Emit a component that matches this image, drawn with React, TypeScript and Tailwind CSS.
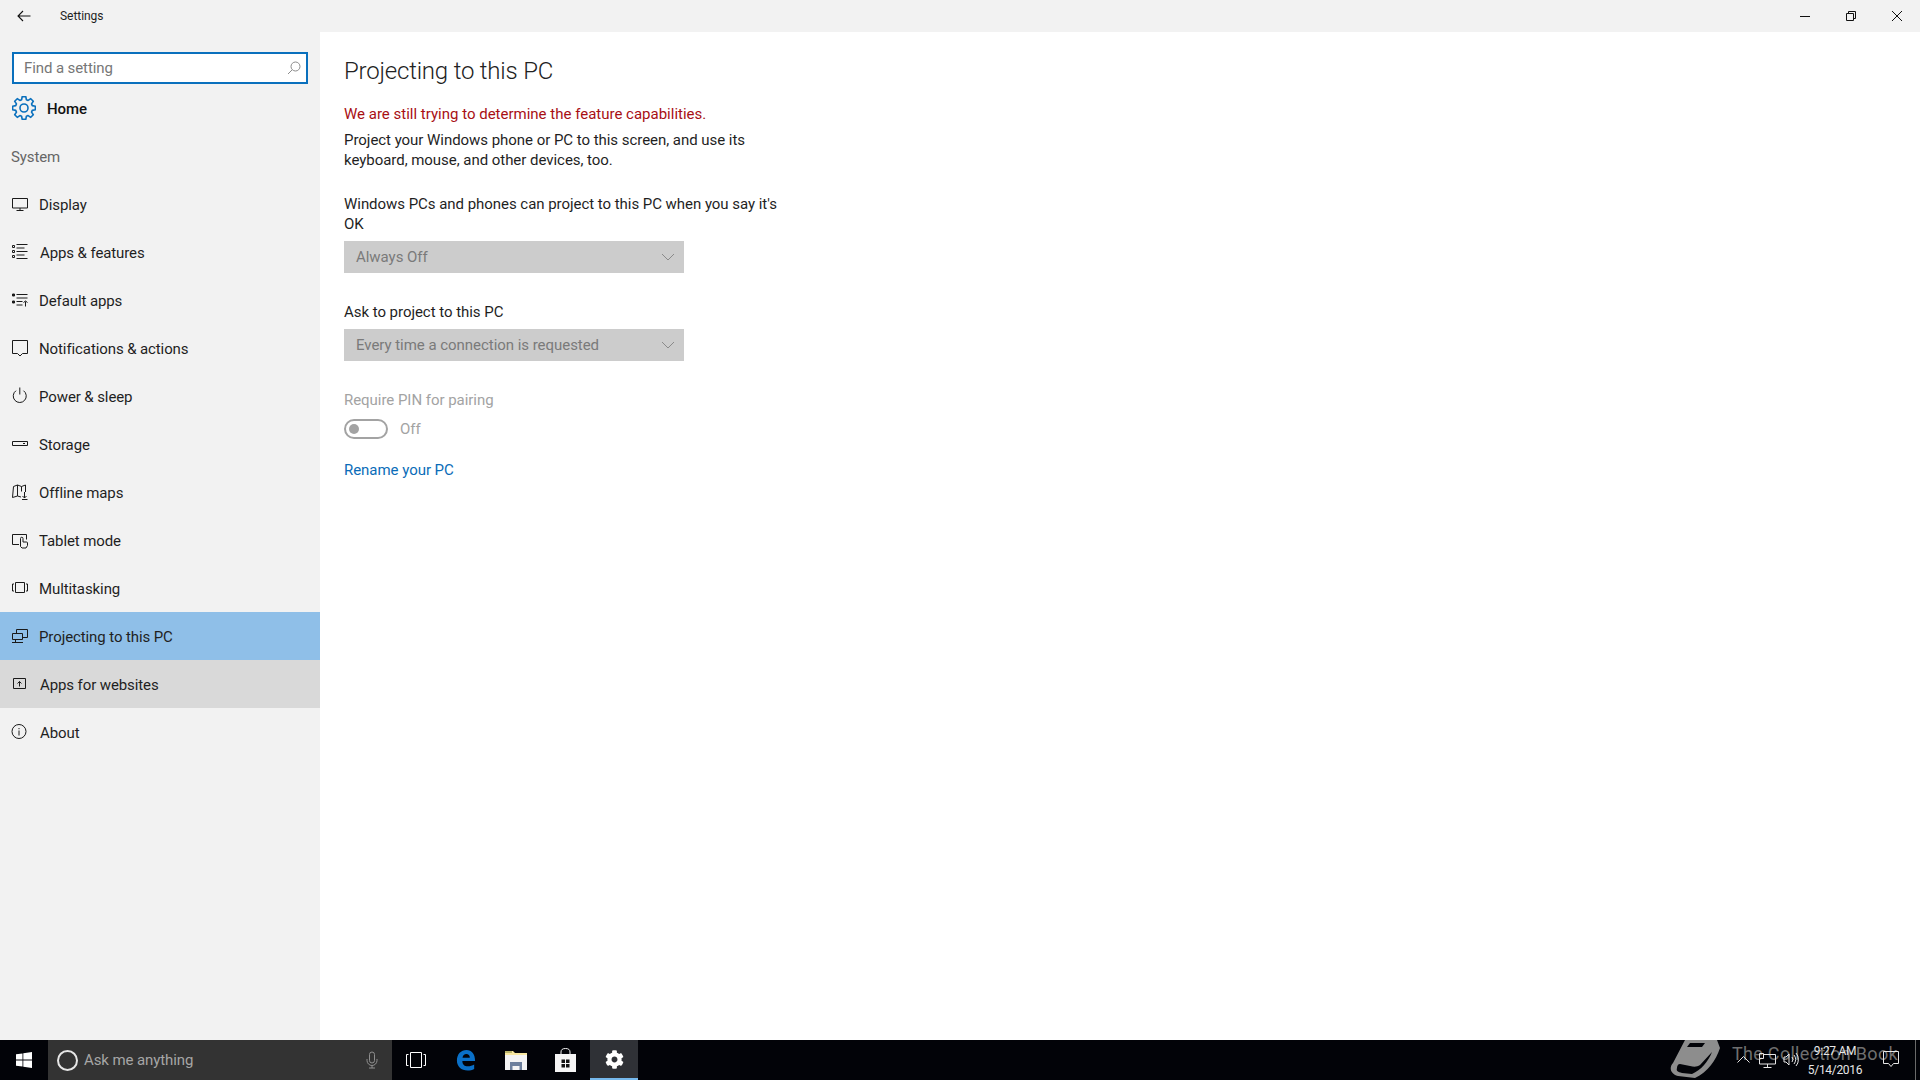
import React from "react";
import { FaCog } from "react-icons/fa";

const S = ({ children, w = 18, h = 18, vb = "0 0 18 18", c = "#1a1a1a" }: { children: React.ReactNode; w?: number; h?: number; vb?: string; c?: string }) => (
  <svg width={w} height={h} viewBox={vb} fill="none" stroke={c} strokeWidth="1" className="shrink-0">
    {children}
  </svg>
);

const gearPath = (() => {
  const teeth = 8;
  const pts: string[] = [];
  const c = 12;
  const outer = 11.5;
  const inner = 8.6;
  for (let i = 0; i < teeth; i++) {
    const a = (i * 2 * Math.PI) / teeth - Math.PI / 2;
    const d = (2 * Math.PI) / teeth;
    const ps = [
      [inner, a - d * 0.36],
      [outer, a - d * 0.2],
      [outer, a + d * 0.2],
      [inner, a + d * 0.36],
    ];
    ps.forEach(([r, t]) => {
      pts.push(`${(c + r * Math.cos(t)).toFixed(2)} ${(c + r * Math.sin(t)).toFixed(2)}`);
    });
  }
  return "M" + pts.join("L") + "Z";
})();

const icons: Record<string, React.ReactNode> = {
  display: <S><path d="M1.500 3.500h15v9.500h-15zM9 13v2M5.500 15.500h7" /></S>,
  apps: <S><path d="M1.500 2.500h2v2h-2zM1.500 7.500h2v2h-2zM1.500 12.500h2v2h-2z M5.500 1.500h11M5.500 5h8M5.500 8.500h11M5.500 15.500h11M5.500 12h8" /></S>,
  defaults: <S><path d="M1.500 3h2v2h-2zM1.500 10h2v2h-2z" fill="#1a1a1a" /><path d="M5.500 3.500h11M5.500 7h11M5.500 10.500h6M5.500 14h6M14.500 15.500v-5M12.500 11.500l2-1.500 2 1.500" /></S>,
  notifications: <S><path d="M1.500 1.500h15v13h-5L9 17l-2.500-2.500h-5z" /></S>,
  power: <S><path d="M5 3.700a6.500 6.500 0 1 0 7.500 0M8.800 .5v7" /></S>,
  storage: <S><path d="M1.500 6.500h15v4h-15z" /><path d="M12 8.500h2" /></S>,
  maps: <S><path d="M2.500 3.500l4-1.500 4 1.500 4-1.500v7M2.500 3.500l-1 11 5-1.500 3.500 1M6.500 2v11M10.500 3.500v5M13.500 9v6M11.500 13l2 2 2-2M11 16.500h5.500" /></S>,
  tablet: <S><path d="M8 13.500H1.500v-10h14v5" /><path d="M9.500 15.500v-8a1.200 1.200 0 0 1 2.500 0v3.500h3.500a1 1 0 0 1 1 1v2.500l-1.500 2.500h-4z" fill="#f2f2f2" /></S>,
  multitasking: <S><path d="M4.500 3.500h9v10h-9zM3 5H1.500v7H3M15 5h1.500v7H15" /></S>,
  projecting: <S><path d="M5.500 6V2.500h11v8H12M1.500 6.500h10v6h-10zM1 15.500h11M4.500 13v2.500" /></S>,
  websites: <S><path d="M2.500 3.500h12v10h-12zM8.500 11.500v-5M6.500 8.500l2-2 2 2" /></S>,
  about: <S><circle cx="8" cy="8.500" r="7" /><path d="M8 7.500v5M8 5v1.200" /></S>,
};

const items = [
  { k: "display", t: "Display", m: "ml-[10px]" },
  { k: "apps", t: "Apps & features", m: "ml-[11px]" },
  { k: "defaults", t: "Default apps", m: "ml-[10px]" },
  { k: "notifications", t: "Notifications & actions", m: "ml-[10px]" },
  { k: "power", t: "Power & sleep", m: "ml-[10px]" },
  { k: "storage", t: "Storage", m: "ml-[10px]" },
  { k: "maps", t: "Offline maps", m: "ml-[10px]" },
  { k: "tablet", t: "Tablet mode", m: "ml-[10px]" },
  { k: "multitasking", t: "Multitasking", m: "ml-[10px]" },
  { k: "projecting", t: "Projecting to this PC", m: "ml-[10px]", bg: "bg-[#8fbfe8]" },
  { k: "websites", t: "Apps for websites", m: "ml-[11px]", bg: "bg-[#d9d9d9]" },
  { k: "about", t: "About", m: "ml-[11px]" },
];

function Chevron() {
  return (
    <svg width="14" height="8" viewBox="0 0 14 8" fill="none" stroke="#8a8a8a" strokeWidth="1">
      <path d="M1 1l6 6 6-6" />
    </svg>
  );
}

function Dropdown({ text }: { text: string }) {
  return (
    <div className="flex h-8 w-[340px] items-center justify-between bg-[#cccccc] pl-3 pr-[9px] text-[#7a7a7a]">
      <span>{text}</span>
      <Chevron />
    </div>
  );
}

export default function App() {
  return (
    <div className="flex h-[1080px] w-[1920px] flex-col overflow-hidden bg-white text-[15px] leading-5 tracking-[-0.04px] text-[#1f1f1f] [font-family:Roboto,'Liberation_Sans',sans-serif]">
      <header className="flex h-8 shrink-0 items-center bg-[#f2f2f2]">
        <div className="flex w-[60px] justify-center pr-[12px]">
          <svg width="14" height="12" viewBox="0 0 14 12" fill="none" stroke="#111" strokeWidth="1.1">
            <path d="M13.500 6H1M6 1L1 6l5 5" />
          </svg>
        </div>
        <span className="text-xs tracking-[-0.05px]">Settings</span>
        <div className="ml-auto flex items-center">
          <div className="flex w-[46px] justify-center">
            <svg width="12" height="10" viewBox="0 0 12 10" stroke="#111"><path d="M1 5.500h10" /></svg>
          </div>
          <div className="flex w-[46px] justify-center">
            <svg width="12" height="12" viewBox="0 0 12 12" fill="none" stroke="#111"><path d="M1.500 3.500h7v7h-7zM3.500 3.500v-2h7v7h-2" /></svg>
          </div>
          <div className="flex w-[46px] justify-center">
            <svg width="12" height="12" viewBox="0 0 12 12" fill="none" stroke="#111"><path d="M1 1l10 10M11 1L1 11" /></svg>
          </div>
        </div>
      </header>

      <div className="flex min-h-0 flex-1">
        <aside className="w-[320px] shrink-0 bg-[#f2f2f2] tracking-[-0.1px]">
          <div className="px-3 pt-5">
            <div className="flex h-8 items-center justify-between border-2 border-[#0a70bd] bg-white pl-[10px] pr-[5px] text-[#777777]">
              <span>Find a setting</span>
              <svg width="14" height="14" viewBox="0 0 14 14" fill="none" stroke="#8c8c8c"><circle cx="8.500" cy="5.500" r="4.500" /><path d="M5.200 8.800L1 13" /></svg>
            </div>
          </div>
          <div className="flex h-12 items-center pl-3">
            <svg width="24" height="24" viewBox="0 0 24 24" fill="none" stroke="#0a70bd" strokeWidth="1.600" strokeLinejoin="round" className="shrink-0">
              <path d={gearPath} />
              <circle cx="12" cy="12" r="4" />
            </svg>
            <span className="ml-[11px] pt-[2px] font-medium tracking-[-0.04px] text-[#111]">Home</span>
          </div>
          <div className="flex h-12 items-center pt-[2px] pl-[11px] text-[#666666]">System</div>
          <nav>
            {items.map((i) => (
              <div key={i.k} className={`flex h-12 items-center pl-[11px] ${i.bg ?? ""}`}>
                {icons[i.k]}
                <span className={`${i.m} pt-[2px]`}>{i.t}</span>
              </div>
            ))}
          </nav>
        </aside>

        <main className="min-w-0 flex-1 pl-6">
          <h1 className="pt-[21px] text-[24px] leading-9 font-light tracking-[-0.2px] text-[#222]">Projecting to this PC</h1>
          <p className="mt-[15px] tracking-normal text-[#a80f14]">We are still trying to determine the feature capabilities.</p>
          <p className="mt-[6px] w-[440px]">Project your Windows phone or PC to this screen, and use its keyboard, mouse, and other devices, too.</p>
          <p className="mt-[24px] w-[440px]">Windows PCs and phones can project to this PC when you say it's OK</p>
          <div className="mt-[7px]"><Dropdown text="Always Off" /></div>
          <p className="mt-[29px]">Ask to project to this PC</p>
          <div className="mt-[7px]"><Dropdown text="Every time a connection is requested" /></div>
          <p className="mt-[29px] text-[#a3a3a3]">Require PIN for pairing</p>
          <div className="mt-[9px] flex items-center text-[#a3a3a3]">
            <div className="flex h-5 w-11 items-center rounded-full border-2 border-[#a3a3a3] pl-[3px]">
              <div className="size-[10px] rounded-full bg-[#a3a3a3]" />
            </div>
            <span className="ml-3">Off</span>
          </div>
          <p className="mt-[21px] text-[#0a6cb8]">Rename your PC</p>
        </main>
      </div>

      <footer className="relative flex h-10 shrink-0 items-center bg-[#020308]">
        <div className="flex w-12 justify-center">
          <svg width="16" height="16" viewBox="0 0 16 16" fill="#fff"><path d="M0 2.300l6.500-.9v6.200H0zM7.300 1.300L16 0v7.600H7.300zM0 8.400h6.500v6.200L0 13.700zM7.300 8.400H16V16l-8.700-1.200z" /></svg>
        </div>
        <div className="flex h-10 w-[344px] items-center bg-[#333333] pl-[9px] pr-[14px] tracking-[-0.1px] text-[#a6a6a6]">
          <div className="size-[21px] rounded-full border-2 border-[#e6e6e6]" />
          <span className="ml-[6px]">Ask me anything</span>
          <svg className="ml-auto" width="12" height="18" viewBox="0 0 12 18" fill="none" stroke="#8f8f8f"><rect x="3.500" y="1" width="5" height="11" rx="2.500" /><path d="M1 8v1.500a5 5 0 0 0 10 0V8M6 14.500V17M3 17h6" /></svg>
        </div>
        <div className="flex w-12 justify-center">
          <svg width="20" height="16" viewBox="0 0 20 16" fill="none" stroke="#fff"><path d="M4.500 .5h11v15h-11zM2.500 2.500H.5v11h2M17.500 2.500h2v11h-2" /></svg>
        </div>
        <div className="flex w-[52px] justify-center">
          <svg width="20" height="22" viewBox="0 0 22 23"><path d="M1 12C1 5 5.500 .5 11.500 .5 17.500 .5 21 5 21 12.500H7C7 16.500 9.500 18.500 13 18.500c2.500 0 5-.7 7-2v4.800c-2.200 1.200-4.600 1.700-7.200 1.700C5.800 23 1 18.500 1 12zM7.200 9h8c0-2.500-1.500-4-3.900-4C9.200 5 7.600 6.500 7.200 9z" fill="#0a70c8" /></svg>
        </div>
        <div className="flex w-[48px] justify-center">
          <svg width="22" height="20" viewBox="0 0 22 20"><path d="M0 1h8l2 2h12v17H0z" fill="#f8e7a0" /><path d="M0 1h7v2H0z" fill="#b9b36a" /><path d="M0 5h22v15H0z" fill="#f4f4f4" /><path d="M5 20v-8h12v8h-2.500v-4h-7v4z" fill="#6d7f9c" /></svg>
        </div>
        <div className="flex w-[50px] justify-center">
          <svg width="21" height="24" viewBox="0 0 21 24"><path d="M0 6h21v18H0z" fill="#f5f5f5" /><path d="M6 7V4a4.500 3.500 0 0 1 9 0v3" fill="none" stroke="#f5f5f5" /><path d="M6.500 11.500h3.500v3.500H6.500zM11 11.500h3.500v3.500H11zM6.500 16h3.500v3.500H6.500zM11 16h3.500v3.500H11z" fill="#111" /></svg>
        </div>
        <div className="flex h-10 w-12 items-center justify-center border-b-2 border-[#76b9ed] bg-[#2f3136]">
          <FaCog size={19} color="#fff" />
        </div>

        <svg className="absolute top-0 left-[1670px]" width="50" height="40" viewBox="0 0 50 40" fill="#8d8d8d">
          <path d="M15 0H47L50 8C46 20 38 32 25 38L8 36C0 34-1 27 3 23Z" />
          <path d="M7 28C6 31 8 32 12 33L22 34C31 30 38 22 42 12L30 25C27 27 24 27 20 26L10 24C8 24 7 26 7 28Z" fill="#020308" />
          <path d="M20 3H35L32 7H17Z" fill="#020308" />
        </svg>
        <span className="absolute top-[2px] left-[1732px] text-[18px] leading-6 tracking-[0.3px] whitespace-nowrap text-[#6f6f6f]">The Collection Book</span>
        <svg className="absolute top-[15px] left-[1737px]" width="13" height="8" viewBox="0 0 13 8" fill="none" stroke="#e6e6e6"><path d="M.5 7.500l6-6 6 6" /></svg>
        <svg className="absolute top-[11px] left-[1759px]" width="17" height="17" viewBox="0 0 17 17" fill="none" stroke="#e6e6e6"><path d="M4 3.500h12.500v9.500H.5V7.500M8.500 13v3M4.500 16.500h8M.5 2.500h4v5h-4z" /></svg>
        <svg className="absolute top-[12px] left-[1783px]" width="16" height="15" viewBox="0 0 16 15" fill="none" stroke="#e6e6e6"><path d="M1 5v5h2l3 3V2L3 5zM9 5a4 4 0 0 1 0 5M11 3a7 7 0 0 1 0 9M13 1a10 10 0 0 1 0 13" /></svg>
        <div className="absolute top-[2px] left-[1805px] w-[60px] text-center text-xs leading-[19px] tracking-[-0.3px] whitespace-nowrap text-[#e6e6e6]">
          <div>9:27 AM</div>
          <div>5/14/2016</div>
        </div>
        <svg className="absolute top-[11px] left-[1883px]" width="16" height="17" viewBox="0 0 16 17" fill="none" stroke="#e6e6e6"><path d="M.5 .5h15v12h-5L8 15.500 5.500 12.500h-5z" /></svg>
        <div className="absolute top-0 left-[1915px] h-10 w-px bg-[#6a6a6a]" />
      </footer>
    </div>
  );
}
